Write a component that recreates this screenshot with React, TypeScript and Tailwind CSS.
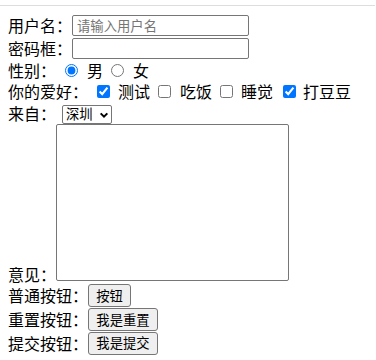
import React from "react";

const font = "font-['Noto_Sans_CJK_SC','Noto_Sans',sans-serif]";
const ctl = "font-['Noto_Sans_CJK_SC','Noto_Sans',sans-serif] text-[13.33px] text-black";

function Btn({ children, w }: { children: React.ReactNode; w: string }) {
  return (
    <button
      type="button"
      className={`${ctl} ${w} h-[23px] rounded-[3px] border border-[#767676] bg-[#efefef] leading-none`}
    >
      {children}
    </button>
  );
}

export default function App() {
  return (
    <div className={`${font} min-h-[360px] w-[376px] bg-white text-[16px] text-black`}>
      <div className="h-[5px]" />
      <div className="h-[1px] w-[375px] bg-[#dddddd]" />
      <form className="flex flex-col pl-[8px] pt-[8px]">
        <div className="flex h-[23px] items-center leading-[23px]">
          <span className="w-[64px]">用户名：</span>
          <input
            type="text"
            placeholder="请输入用户名"
            className={`${ctl} h-[21px] w-[177px] rounded-[2px] border border-[#767676] px-[4px] placeholder:text-[#757575]`}
          />
        </div>
        <div className="flex h-[23px] items-center leading-[23px]">
          <span className="w-[64px]">密码框：</span>
          <input
            type="password"
            className={`${ctl} h-[21px] w-[177px] rounded-[2px] border border-[#767676] px-[4px]`}
          />
        </div>
        <div className="flex h-[21px] items-center leading-[21px]">
          <span className="w-[48px]">性别：</span>
          <input type="radio" name="sex" defaultChecked className="ml-[9px] h-[13px] w-[13px] accent-[#0075ff]" />
          <span className="ml-[9px]">男</span>
          <input type="radio" name="sex" className="ml-[8px] h-[13px] w-[13px]" />
          <span className="ml-[9px]">女</span>
        </div>
        <div className="flex h-[21px] items-center leading-[21px]">
          <span className="w-[80px]">你的爱好：</span>
          <input type="checkbox" defaultChecked className="ml-[9px] h-[13px] w-[13px] accent-[#0075ff]" />
          <span className="ml-[8px]">测试</span>
          <input type="checkbox" className="ml-[8px] h-[13px] w-[13px]" />
          <span className="ml-[9px]">吃饭</span>
          <input type="checkbox" className="ml-[8px] h-[13px] w-[13px]" />
          <span className="ml-[8px]">睡觉</span>
          <input type="checkbox" defaultChecked className="ml-[10px] h-[13px] w-[13px] accent-[#0075ff]" />
          <span className="ml-[7px]">打豆豆</span>
        </div>
        <div className="flex h-[22px] items-center leading-[22px]">
          <span className="w-[48px]">来自：</span>
          <div className="relative ml-[6px] mt-[2px] flex">
            <select
              defaultValue="sz"
              className={`${ctl} h-[19px] w-[50px] appearance-none rounded-[2px] border border-[#767676] pl-[3px] leading-none`}
            >
              <option value="bj">北京</option>
              <option value="sh">上海</option>
              <option value="sz">深圳</option>
            </select>
            <svg
              viewBox="0 0 12 12"
              className="pointer-events-none absolute right-[3px] top-[5px] h-[10px] w-[10px]"
            >
              <path d="M2 4l4 4 4-4" fill="none" stroke="black" strokeWidth="2.4" />
            </svg>
          </div>
        </div>
        <div className="flex items-end">
          <span className="mb-[-1px] w-[48px] leading-none">意见：</span>
          <textarea className="h-[157px] w-[233px] resize-none rounded-[2px] border border-[#767676]" />
        </div>
        <div className="mt-[3px] flex h-[24px] items-start">
          <span className="w-[80px] leading-[23px]">普通按钮：</span>
          <Btn w="w-[43px]">按钮</Btn>
        </div>
        <div className="flex h-[23.5px] items-start">
          <span className="w-[80px] leading-[23px]">重置按钮：</span>
          <Btn w="w-[70px]">我是重置</Btn>
        </div>
        <div className="flex h-[23.5px] items-start">
          <span className="w-[80px] leading-[23px]">提交按钮：</span>
          <Btn w="w-[70px]">我是提交</Btn>
        </div>
      </form>
    </div>
  );
}
